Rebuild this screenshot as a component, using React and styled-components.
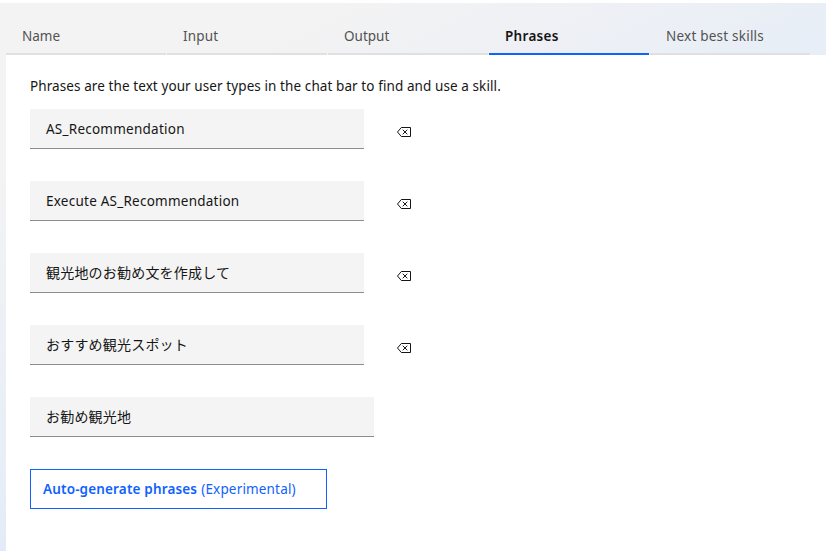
import React from "react";
import styled, { createGlobalStyle } from "styled-components";

const GlobalStyle = createGlobalStyle`
  * { box-sizing: border-box; }
  body {
    margin: 0;
    font-family: "Noto Sans", "Noto Sans CJK JP", sans-serif;
    font-size: 13.5px;
    line-height: 18px;
    color: #161616;
  }
`;

const Page = styled.main`
  display: flex;
  flex-direction: column;
  width: 826px;
  height: 551px;
  padding-left: 6px;
  border-top: 3px solid #fff;
  overflow: hidden;
  background: linear-gradient(153deg, #f3f3f3 18%, #eef0f5 33%, #e7eef7 48%, #e1ebf7 58%);
`;

const TabList = styled.nav`
  display: flex;
  flex: none;
  gap: 1px;
  height: 52px;
`;

const Tab = styled.button`
  width: 160px;
  height: 52px;
  padding: 16px 16px 0;
  border: 0;
  border-bottom: 2px solid ${(p) => (p.$active ? "#0f62fe" : "#e0e0e0")};
  background: none;
  font: inherit;
  font-weight: ${(p) => (p.$active ? 600 : 400)};
  letter-spacing: ${(p) => p.$spacing}px;
  color: ${(p) => (p.$active ? "#161616" : "#525252")};
  text-align: left;
  white-space: nowrap;
`;

const Panel = styled.section`
  flex: 1;
  padding: 22px 24px;
  background: #fff;
`;

const Intro = styled.p`
  margin: 0 0 14px;
  letter-spacing: 0.09px;
  white-space: nowrap;
`;

const PhraseRow = styled.div`
  display: flex;
  align-items: center;
  height: 40px;
  margin-bottom: 32px;
`;

const PhraseField = styled.div`
  width: ${(p) => (p.$wide ? 344 : 334)}px;
  height: 40px;
  padding: 11px 16px 10px;
  border-bottom: 1px solid #8d8d8d;
  background: #f4f4f4;
  font-size: ${(p) => (p.$japanese ? 14 : 13.5)}px;
  letter-spacing: ${(p) => (p.$japanese ? 0.2 : 0.24)}px;
  white-space: nowrap;
`;

const RemoveButton = styled.button`
  display: flex;
  width: 16px;
  height: 16px;
  margin: 5px 0 0 32px;
  padding: 0;
  border: 0;
  background: none;
  color: #161616;
`;

const GenerateButton = styled.button`
  display: flex;
  align-items: center;
  gap: 4px;
  width: 297px;
  height: 40px;
  padding: 0 12px;
  border: 1px solid #0f62fe;
  background: #fff;
  font: inherit;
  color: #0f62fe;
  white-space: nowrap;
`;

const Strong = styled.span`
  font-weight: 600;
  letter-spacing: 0.16px;
`;

const Note = styled.span`
  letter-spacing: 0.17px;
`;

const EraseIcon = () => (
  <svg width="16" height="16" viewBox="0 0 16 16" fill="none" stroke="currentColor">
    <path d="M5.3 3.5H14.5V12.5H5.3L1.5 8Z" />
    <path d="M6.7 5.7L11.3 10.3M11.3 5.7L6.7 10.3" />
  </svg>
);

const tabs = [
  { label: "Name", spacing: 0 },
  { label: "Input", spacing: 0.2 },
  { label: "Output", spacing: 0 },
  { label: "Phrases", spacing: 0.3, active: true },
  { label: "Next best skills", spacing: 0.22 },
];

const phrases = [
  { text: "AS_Recommendation", removable: true },
  { text: "Execute AS_Recommendation", removable: true },
  { text: "観光地のお勧め文を作成して", japanese: true, removable: true },
  { text: "おすすめ観光スポット", japanese: true, removable: true },
  { text: "お勧め観光地", japanese: true, removable: false },
];

export default function App() {
  return (
    <>
      <GlobalStyle />
      <Page>
        <TabList>
          {tabs.map((tab) => (
            <Tab key={tab.label} $active={tab.active} $spacing={tab.spacing}>
              {tab.label}
            </Tab>
          ))}
        </TabList>
        <Panel>
          <Intro>Phrases are the text your user types in the chat bar to find and use a skill.</Intro>
          {phrases.map((phrase) => (
            <PhraseRow key={phrase.text}>
              <PhraseField $wide={!phrase.removable} $japanese={phrase.japanese}>
                {phrase.text}
              </PhraseField>
              {phrase.removable && (
                <RemoveButton aria-label="Remove phrase">
                  <EraseIcon />
                </RemoveButton>
              )}
            </PhraseRow>
          ))}
          <GenerateButton>
            <Strong>Auto-generate phrases</Strong>
            <Note>(Experimental)</Note>
          </GenerateButton>
        </Panel>
      </Page>
    </>
  );
}
